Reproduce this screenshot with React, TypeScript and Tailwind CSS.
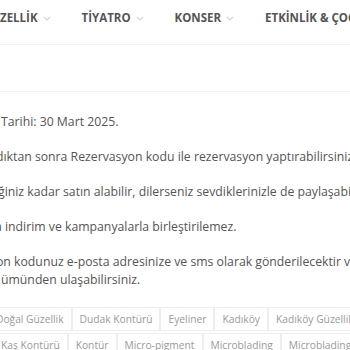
import React from "react";

const Chevron = () => (
  <svg width="8" height="5" viewBox="0 0 8 5" className="ml-[5px] mt-[1px]">
    <path d="M0.8 0.8 L4 4 L7.2 0.8" fill="none" stroke="#d2d2d2" strokeWidth="1.1" />
  </svg>
);

const navItems = ["GÜZELLİK", "TİYATRO", "KONSER", "ETKİNLİK & ÇOCUK"];
const tags1 = ["Doğal Güzellik", "Dudak Kontürü", "Eyeliner", "Kadıköy", "Kadıköy Güzellik"];
const tags2 = ["Kaş Kontürü", "Kontür", "Micro-pigment", "Microblading", "Microblading Kadıköy"];

export default function App() {
  return (
    <div className="w-[350px] h-[350px] overflow-hidden bg-white" style={{ fontFamily: '"Open Sans", sans-serif' }}>
      <div className="h-[45px] border-b border-[#f3f3f3] flex items-center">
        <div className="flex items-center gap-[31px] ml-[-17px] whitespace-nowrap text-[11.5px] font-bold text-[#555] mt-[-9px]">
          {navItems.map((n) => (
            <div key={n} className="flex items-center">
              <span>{n}</span>
              {n !== "ETKİNLİK & ÇOCUK" && <Chevron />}
            </div>
          ))}
        </div>
      </div>
      <div className="h-[47px] border-b border-[#f3f3f3]" />
      <div className="pt-[21px] text-[12.25px] leading-[18px] text-[#555] whitespace-nowrap">
        <p className="mb-[17px] ml-[1px]">Tarihi: 30 Mart 2025.</p>
        <p className="mb-[17px] ml-[-4px]">dıktan sonra Rezervasyon kodu ile rezervasyon yaptırabilirsiniz.</p>
        <p className="mb-[17px] ml-[-2px]">ğiniz kadar satın alabilir, dilerseniz sevdiklerinizle de paylaşabilirsiniz.</p>
        <p className="mb-[17px] ml-[-5px]">a indirim ve kampanyalarla birleştirilemez.</p>
        <p className="ml-[-4px]">on kodunuz e-posta adresinize ve sms olarak gönderilecektir ve</p>
        <p className="ml-[1px]">ümünden ulaşabilirsiniz.</p>
      </div>
      <div className="mt-[18px] flex flex-col gap-[2px] text-[10.25px] text-[#9a9a9a] whitespace-nowrap">
        <div className="flex ml-[-12px]">
          {tags1.map((t) => (
            <span key={t} className="border border-[#eeeeee] px-[7px] h-[24px] leading-[22px]">{t}</span>
          ))}
        </div>
        <div className="flex ml-[-7px]">
          {tags2.map((t) => (
            <span key={t} className="border border-[#eeeeee] px-[7px] h-[24px] leading-[22px]">{t}</span>
          ))}
        </div>
      </div>
    </div>
  );
}
